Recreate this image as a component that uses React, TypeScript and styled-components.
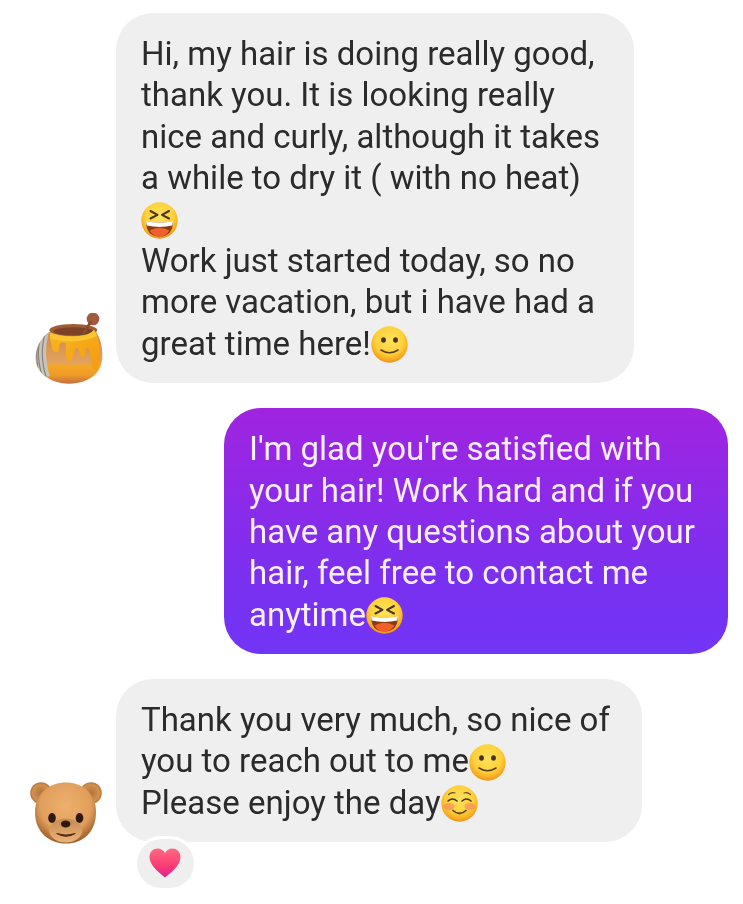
import React from "react";
import styled, { createGlobalStyle } from "styled-components";

const GlobalStyle = createGlobalStyle`
    html, body {
        margin: 0;
        padding: 0;
        background: #fff;
    }
    body {
        font-family: Roboto, "Liberation Sans", sans-serif;
    }
`;

const FaceDefs = ({ id }: { id: string }) => (
    <defs>
        <radialGradient id={id} cx="50%" cy="38%" r="62%">
            <stop offset="0%" stopColor="#ffe25c" />
            <stop offset="62%" stopColor="#fdd13a" />
            <stop offset="88%" stopColor="#f8a91f" />
            <stop offset="100%" stopColor="#f08f1c" />
        </radialGradient>
    </defs>
);

const LaughEmoji = ({ id }: { id: string }) => (
    <EmojiSvg viewBox="0 0 37 37">
        <FaceDefs id={id} />
        <circle cx="18.5" cy="18.5" r="18.2" fill={`url(#${id})`} />
        <path d="M9.5 9 L16.5 12.8 L9.5 16.5" fill="none" stroke="#4a3420" strokeWidth="2" strokeLinecap="round" strokeLinejoin="round" />
        <path d="M28 9 L21 12.8 L28 16.5" fill="none" stroke="#4a3420" strokeWidth="2" strokeLinecap="round" strokeLinejoin="round" />
        <path d="M5 19 Q18.5 22 32 19 Q32 34.5 18.5 34.5 Q5 34.5 5 19 Z" fill="#8a3b14" />
        <path d="M8.5 28.5 Q18.5 23 28.5 28.5 Q25 34.5 18.5 34.5 Q12 34.5 8.5 28.5 Z" fill="#f0602a" />
        <path d="M5 19 Q18.5 22 32 19 L31.3 23.6 Q18.5 26.5 5.7 23.6 Z" fill="#fff" />
    </EmojiSvg>
);

const SmileEmoji = ({ id }: { id: string }) => (
    <EmojiSvg viewBox="0 0 37 37">
        <FaceDefs id={id} />
        <circle cx="18.5" cy="18.5" r="18.2" fill={`url(#${id})`} />
        <ellipse cx="12.5" cy="14" rx="2.4" ry="2.8" fill="#4a3420" />
        <ellipse cx="24.5" cy="14" rx="2.4" ry="2.8" fill="#4a3420" />
        <path d="M10 24 Q18.5 29.5 27 24" fill="none" stroke="#5a3d20" strokeWidth="1.6" strokeLinecap="round" />
    </EmojiSvg>
);

const BlushEmoji = ({ id }: { id: string }) => (
    <EmojiSvg viewBox="0 0 37 37">
        <FaceDefs id={id} />
        <circle cx="18.5" cy="18.5" r="18.2" fill={`url(#${id})`} />
        <ellipse cx="8" cy="21.5" rx="5.5" ry="3.6" fill="#f78a5c" opacity="0.7" />
        <ellipse cx="29" cy="21.5" rx="5.5" ry="3.6" fill="#f78a5c" opacity="0.7" />
        <path d="M7 16 Q11.5 12 16 16" fill="none" stroke="#4a3420" strokeWidth="1.6" strokeLinecap="round" />
        <path d="M21 16 Q25.5 12 30 16" fill="none" stroke="#4a3420" strokeWidth="1.6" strokeLinecap="round" />
        <path d="M7.5 9.5 Q10.5 7 14 8" fill="none" stroke="#6b4a24" strokeWidth="1.2" strokeLinecap="round" />
        <path d="M29.5 9.5 Q26.5 7 23 8" fill="none" stroke="#6b4a24" strokeWidth="1.2" strokeLinecap="round" />
        <path d="M12 25.5 Q18.5 31.5 25 25.5" fill="none" stroke="#5a3d20" strokeWidth="1.7" strokeLinecap="round" />
    </EmojiSvg>
);

const HoneyPot = () => (
    <svg width="68" height="73" viewBox="3 15 204 219" style={{ display: "block" }}>
        <defs>
            <linearGradient id="potBody" x1="0" y1="70" x2="0" y2="227" gradientUnits="userSpaceOnUse">
                <stop offset="0%" stopColor="#d08a4c" />
                <stop offset="60%" stopColor="#e2a25c" />
                <stop offset="66%" stopColor="#f5a823" />
                <stop offset="84%" stopColor="#ef9a28" />
                <stop offset="100%" stopColor="#c26f42" />
            </linearGradient>
            <linearGradient id="honey" x1="0" y1="0" x2="1" y2="1">
                <stop offset="0%" stopColor="#f9b61f" />
                <stop offset="100%" stopColor="#f49c12" />
            </linearGradient>
            <clipPath id="potClip">
                <path d="M50 70 C18 88 5 125 5 150 C5 195 50 227 105 227 C165 227 205 195 205 145 C205 110 197 88 185 70 Z" />
            </clipPath>
        </defs>
        <circle cx="177" cy="33" r="19" fill="#a25a3e" />
        <path d="M50 70 C18 88 5 125 5 150 C5 195 50 227 105 227 C165 227 205 195 205 145 C205 110 197 88 185 70 Z" fill="url(#potBody)" />
        <g clipPath="url(#potClip)">
            <path d="M0 60 H50 C34 95 30 150 48 205 L0 210 Z" fill="#c8c3bc" />
            <path d="M38 70 C22 100 20 155 36 205 M24 80 C10 110 10 150 22 195 M14 100 C6 125 6 150 12 180" fill="none" stroke="#85807a" strokeWidth="3.5" />
        </g>
        <ellipse cx="118" cy="66" rx="72" ry="18" fill="#a05c34" />
        <ellipse cx="118" cy="70" rx="60" ry="12" fill="#7a4226" />
        <path d="M150 74 L170 42" stroke="#8e4a2c" strokeWidth="8" strokeLinecap="round" />
        <path d="M48 74 Q100 92 150 82 Q170 78 180 66 Q195 85 197 130 Q199 165 191 180 Q182 190 175 180 Q170 150 167 126 Q160 114 155 126 Q152 150 145 150 Q138 148 136 130 Q130 112 122 125 Q118 155 106 162 Q95 160 96 130 L95 106 Q82 100 76 110 L73 130 Q62 138 55 125 L52 105 Q46 98 48 74 Z" fill="url(#honey)" />
        <path d="M48 74 Q100 92 150 82 Q170 78 180 66 Q186 74 189 84 Q130 112 50 92 Z" fill="#fcc430" />
    </svg>
);

const Bear = () => (
    <svg width="72" height="64" viewBox="0 0 72 64" style={{ display: "block" }}>
        <defs>
            <radialGradient id="bearHead" cx="50%" cy="38%" r="62%">
                <stop offset="0%" stopColor="#eeb06e" />
                <stop offset="68%" stopColor="#e09e5c" />
                <stop offset="100%" stopColor="#9a5c2a" />
            </radialGradient>
            <radialGradient id="bearEar" cx="50%" cy="50%" r="55%">
                <stop offset="0%" stopColor="#b0733a" />
                <stop offset="70%" stopColor="#d3914f" />
                <stop offset="100%" stopColor="#a66a34" />
            </radialGradient>
            <linearGradient id="bearMuzzle" x1="0" y1="0" x2="0" y2="1">
                <stop offset="0%" stopColor="#c98a4e" />
                <stop offset="100%" stopColor="#e8b47a" />
            </linearGradient>
        </defs>
        <circle cx="11" cy="12" r="10.8" fill="url(#bearEar)" />
        <circle cx="61" cy="12" r="10.8" fill="url(#bearEar)" />
        <path d="M36 1.5 C52 1.5 66 12 66 31 C66 52 52 62.5 36 62.5 C20 62.5 5 52 5 31 C5 12 20 1.5 36 1.5 Z" fill="url(#bearHead)" />
        <ellipse cx="35.7" cy="49.5" rx="16.5" ry="12" fill="url(#bearMuzzle)" />
        <ellipse cx="22" cy="37" rx="3.8" ry="5" fill="#2c1a12" />
        <ellipse cx="49.5" cy="37" rx="3.8" ry="5" fill="#2c1a12" />
        <ellipse cx="35.7" cy="43" rx="4.8" ry="3.4" fill="#2c1a12" />
        <path d="M27 52.5 Q36 55.5 45 52.5 Q36 58 27 52.5 Z" fill="#5a2e16" stroke="#5a2e16" strokeWidth="1.2" strokeLinejoin="round" />
    </svg>
);

const Heart = () => (
    <svg width="32" height="30" viewBox="0 0 32 30">
        <defs>
            <linearGradient id="heartFill" x1="0" y1="0" x2="0" y2="1">
                <stop offset="0%" stopColor="#ff6a80" />
                <stop offset="60%" stopColor="#fb3c76" />
                <stop offset="100%" stopColor="#e01e8c" />
            </linearGradient>
        </defs>
        <path d="M16 29.5 C11 25 0.5 18 0.5 9 C0.5 3.8 4.3 0.5 8.6 0.5 C11.8 0.5 14.6 2.3 16 5 C17.4 2.3 20.2 0.5 23.4 0.5 C27.7 0.5 31.5 3.8 31.5 9 C31.5 18 21 25 16 29.5 Z" fill="url(#heartFill)" />
    </svg>
);

const App = () => {
    return (
        <>
            <GlobalStyle />
            <Thread>
                <Message>
                    <AvatarSlot $left={35} $drop={3}>
                        <HoneyPot />
                    </AvatarSlot>
                    <Bubble $width={518}>
                        <Line>Hi, my hair is doing really good,</Line>
                        <Line>thank you. It is looking really</Line>
                        <Line>nice and curly, although it takes</Line>
                        <Line>a while to dry it ( with no heat)</Line>
                        <Line><LaughEmoji id="laughA" /></Line>
                        <Line>Work just started today, so no</Line>
                        <Line>more vacation, but i have had a</Line>
                        <Line>great time here!<SmileEmoji id="smileA" /></Line>
                    </Bubble>
                </Message>
                <Message $mine>
                    <Bubble $mine $width={504}>
                        <Line>I'm glad you're satisfied with</Line>
                        <Line>your hair! Work hard and if you</Line>
                        <Line>have any questions about your</Line>
                        <Line>hair, feel free to contact me</Line>
                        <Line>anytime<LaughEmoji id="laughB" /></Line>
                    </Bubble>
                </Message>
                <Message>
                    <AvatarSlot $left={30} $drop={3}>
                        <Bear />
                    </AvatarSlot>
                    <Bubble $width={526}>
                        <Line>Thank you very much, so nice of</Line>
                        <Line>you to reach out to me<SmileEmoji id="smileB" /></Line>
                        <Line>Please enjoy the day<BlushEmoji id="blushA" /></Line>
                    </Bubble>
                </Message>
                <Reaction>
                    <Heart />
                </Reaction>
            </Thread>
        </>
    );
};

export default App;

const Thread = styled.div`
    width: 743px;
    height: 904px;
    box-sizing: border-box;
    padding: 13px 15px 0 0;
    display: flex;
    flex-direction: column;
    gap: 25px;
    overflow: hidden;
    background: #fff;
    filter: blur(0.4px);
`;

const Message = styled.div<{ $mine?: boolean }>`
    display: flex;
    align-items: flex-end;
    justify-content: ${(p) => (p.$mine ? "flex-end" : "flex-start")};
`;

const AvatarSlot = styled.div<{ $left: number; $drop: number }>`
    width: 116px;
    flex: none;
    box-sizing: border-box;
    padding-left: ${(p) => p.$left}px;
    margin-bottom: -${(p) => p.$drop}px;
`;

const Bubble = styled.div<{ $mine?: boolean; $width: number }>`
    width: ${(p) => p.$width}px;
    box-sizing: border-box;
    padding: 20px 20px 19px 25px;
    border-radius: 37px;
    font-size: 33px;
    line-height: 41.4px;
    color: ${(p) => (p.$mine ? "#f8eefe" : "#2b2b2b")};
    background: ${(p) => (p.$mine ? "linear-gradient(180deg, #a024e0 0%, #7a30f0 70%, #7135f6 100%)" : "#efefef")};
`;

const Line = styled.div`
    height: 41.4px;
    white-space: nowrap;
`;

const EmojiSvg = styled.svg`
    width: 37px;
    height: 37px;
    vertical-align: -8.5px;
`;

const Reaction = styled.div`
    width: 57.5px;
    height: 49px;
    margin: -31.5px 0 0 133.5px;
    border: 3px solid #fff;
    border-radius: 29px;
    background: #efefef;
    display: flex;
    align-items: center;
    justify-content: center;
    position: relative;
`;
